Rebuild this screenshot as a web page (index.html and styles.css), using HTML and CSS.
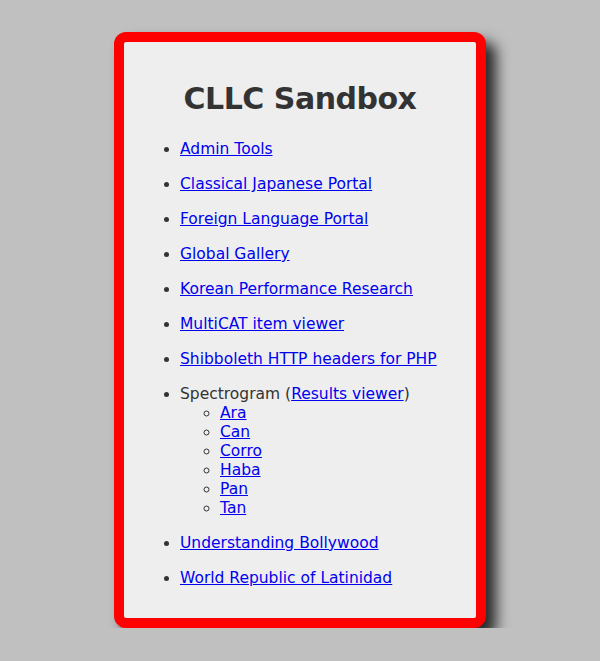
FILE: index.html
```html
<!DOCTYPE html>
<html>
<head>
<meta charset="utf-8">
<title>CLLC Sandbox</title>
<link rel="stylesheet" href="styles.css">
</head>
<body>
<div class="box">
  <h1 class="title">CLLC Sandbox</h1>
  <ul class="links">
    <li><a href="#">Admin Tools</a></li>
    <li><a href="#">Classical Japanese Portal</a></li>
    <li><a href="#">Foreign Language Portal</a></li>
    <li><a href="#">Global Gallery</a></li>
    <li><a href="#">Korean Performance Research</a></li>
    <li><a href="#">MultiCAT item viewer</a></li>
    <li><a href="#">Shibboleth HTTP headers for PHP</a></li>
    <li>Spectrogram (<a href="#">Results viewer</a>)
      <ul class="sub">
        <li><a href="#">Ara</a></li>
        <li><a href="#">Can</a></li>
        <li><a href="#">Corro</a></li>
        <li><a href="#">Haba</a></li>
        <li><a href="#">Pan</a></li>
        <li><a href="#">Tan</a></li>
      </ul>
    </li>
    <li><a href="#">Understanding Bollywood</a></li>
    <li><a href="#">World Republic of Latinidad</a></li>
  </ul>
</div>
</body>
</html>
```
FILE: styles.css
```css
html, body {
  margin: 0;
  padding: 0;
  background: #c0c0c0;
}
body {
  font-family: "DejaVu Sans", Verdana, sans-serif;
  font-size: 15.5px;
  color: #333;
  padding-top: 32px;
}
.box {
  box-sizing: border-box;
  width: 372px;
  height: 596px;
  margin: 0 auto;
  background: #eeeeee;
  border: 10px solid #ff0000;
  border-radius: 12px;
  box-shadow: 10px 10px 14px rgba(0, 0, 0, 0.8);
  padding: 35px 0 0 0;
}
.title {
  margin: 0 0 19px 0;
  text-align: center;
  font-size: 30px;
  letter-spacing: -0.5px;
  line-height: 44px;
  font-weight: bold;
  color: #333;
}
.links {
  margin: 0;
  padding-left: 56px;
  list-style: disc;
  line-height: 19px;
}
.links > li {
  margin-bottom: 16px;
}
.links a {
  color: #0000ee;
  text-decoration: underline;
}
.sub {
  margin: 0;
  padding-left: 40px;
  list-style: circle;
}
.sub > li {
  margin: 0;
}
```
